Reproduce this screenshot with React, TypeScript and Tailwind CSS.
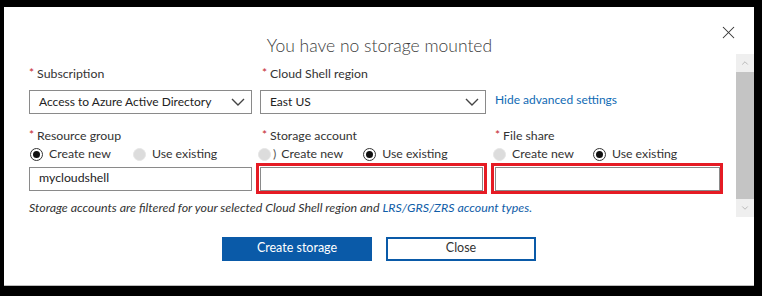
import { ChevronDown, ChevronUp, X } from "lucide-react";

const font = { fontFamily: 'Lato, "Open Sans", sans-serif' };

function Label({ text }: { text: string }) {
  return (
    <div className="flex items-center h-[18px] text-[12.3px] text-[#333]">
      <span className="text-[#c4262e] text-[12px] mr-[3px] -mt-[3px]">*</span>
      {text}
    </div>
  );
}

function Radio({ checked, muted, label }: { checked?: boolean; muted?: boolean; label: string }) {
  return (
    <div className="flex items-center gap-[6px] text-[12.3px] text-[#333]">
      <span
        className={
          muted
            ? "w-[13px] h-[13px] rounded-full bg-[#dcdcdc] border border-[#e6e6e6]"
            : "w-[13px] h-[13px] rounded-full border border-[#333] flex items-center justify-center bg-white"
        }
      >
        {checked && <span className="w-[7px] h-[7px] rounded-full bg-[#111]" />}
      </span>
      {label}
    </div>
  );
}

function Chevron() {
  return (
    <svg width="14" height="8" viewBox="0 0 14 8" fill="none">
      <polyline points="1,1 7,7 13,1" stroke="#444" strokeWidth="1.4" />
    </svg>
  );
}

function Select({ value, width }: { value: string; width: string }) {
  return (
    <div className={`${width} h-[24px] border border-[#8a8a8a] flex items-center justify-between pl-[9px] pr-[6px] text-[12px] text-[#222]`}>
      <span>{value}</span>
      <Chevron />
    </div>
  );
}

export default function App() {
  return (
    <div className="w-[762px] h-[296px] bg-black pt-[7px] pl-[4px]" style={font}>
      <div className="relative w-[750px] h-[279px] bg-white border-b border-[#bdbdbd] flex">
        <div className="flex-1 pl-[25px]">
          <div className="h-[50px] pt-[28px] text-center text-[17.5px] font-light text-[#3c3c3c] leading-[22px] pr-[6px]">
            You have no storage mounted
          </div>
          <div className="flex mt-[8px]">
            <div className="w-[231px]">
              <Label text="Subscription" />
            </div>
            <div className="w-[233px] pl-[2px]">
              <Label text="Cloud Shell region" />
            </div>
          </div>
          <div className="flex items-center mt-[7px]">
            <Select value="Access to Azure Active Directory" width="w-[223px]" />
            <div className="w-[8px]" />
            <Select value="East US" width="w-[226px]" />
            <a className="ml-[9px] text-[12px] text-[#0f6ab4] -mt-[5px]">Hide advanced settings</a>
          </div>
          <div className="flex mt-[13px]">
            <div className="w-[231px]">
              <Label text="Resource group" />
            </div>
            <div className="w-[233px] pl-[2px]">
              <Label text="Storage account" />
            </div>
            <div className="pl-[2px]">
              <Label text="File share" />
            </div>
          </div>
          <div className="flex h-[18px] items-center">
            <div className="w-[229px] flex gap-[22px] pl-[1px]">
              <Radio checked label="Create new" />
              <Radio muted label="Use existing" />
            </div>
            <div className="w-[235px] flex gap-[20px] items-center">
              <div className="flex items-center text-[12.3px] text-[#333]">
                <span className="w-[13px] h-[13px] rounded-full bg-[#dcdcdc] border border-[#e6e6e6] mr-[2px]" />
                <span className="mr-[5px] text-[#555]">)</span>
                Create new
              </div>
              <Radio checked label="Use existing" />
            </div>
            <div className="flex gap-[19px]">
              <Radio muted label="Create new" />
              <Radio checked label="Use existing" />
            </div>
          </div>
          <div className="flex items-center">
            <div className="w-[223px] h-[24px] border border-[#8a8a8a] flex items-center pl-[9px] text-[12.3px] text-[#222]">
              mycloudshell
            </div>
            <div className="ml-[4px] w-[231px] h-[31px] border-[3px] border-[#e51b24] flex items-center justify-center">
              <div className="w-[223px] h-[24px] border border-[#8a8a8a]" />
            </div>
            <div className="ml-[4px] w-[232px] h-[31px] border-[3px] border-[#e51b24] flex items-center justify-center">
              <div className="w-[225px] h-[24px] border border-[#8a8a8a]" />
            </div>
          </div>
          <div className="mt-[5px] text-[12.4px] italic text-[#333]">
            Storage accounts are filtered for your selected Cloud Shell region and{" "}
            <span className="text-[#0f5da8]">LRS/GRS/ZRS account types.</span>
          </div>
          <div className="flex gap-[14px] mt-[19px] ml-[193px]">
            <button className="w-[150px] h-[24px] bg-[#0a5aa8] text-white text-[12.5px]">Create storage</button>
            <button className="w-[150px] h-[24px] border-2 border-[#0a5aa8] text-[#333] text-[12.5px]">Close</button>
          </div>
        </div>
        <X className="absolute left-[714px] top-[15px] w-[21px] h-[21px] text-[#333]" strokeWidth={1.2} />
        <div className="w-[18px] mt-[47px] h-[163px] flex flex-col">
          <div className="h-[18px] bg-[#efefef] flex items-center justify-center">
            <ChevronUp className="w-[10px] h-[10px] text-[#999]" strokeWidth={1.5} />
          </div>
          <div className="flex-1 bg-[#c4c4c4]" />
          <div className="h-[18px] bg-[#efefef] flex items-center justify-center">
            <ChevronDown className="w-[10px] h-[10px] text-[#999]" strokeWidth={1.5} />
          </div>
        </div>
      </div>
    </div>
  );
}
